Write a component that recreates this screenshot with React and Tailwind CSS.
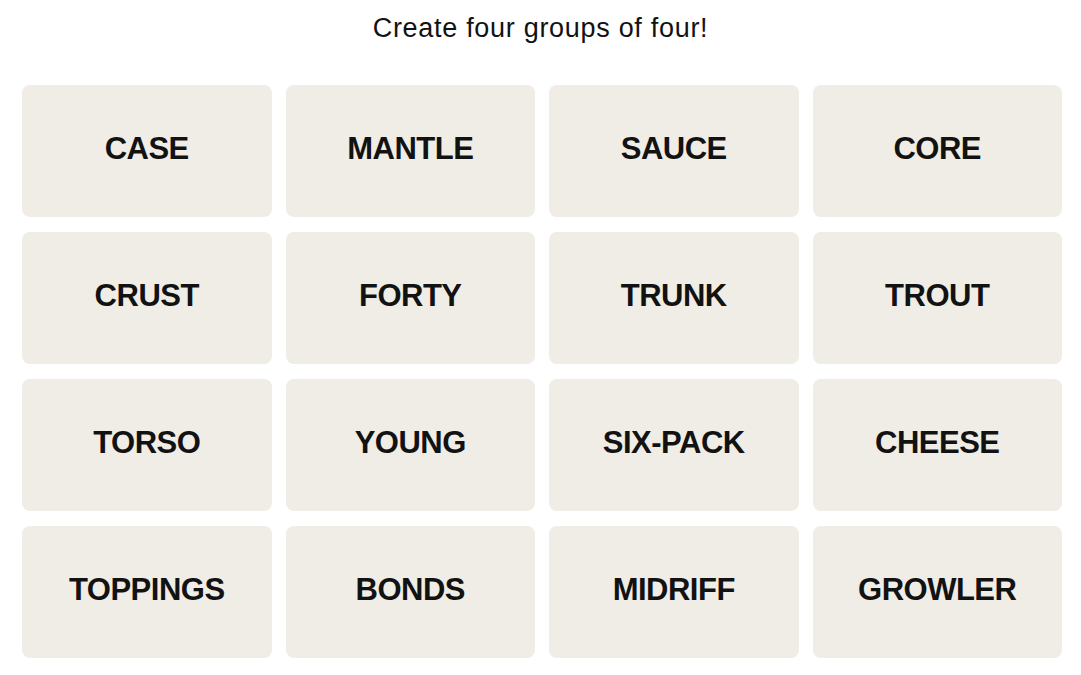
const words = [
  'CASE', 'MANTLE', 'SAUCE', 'CORE',
  'CRUST', 'FORTY', 'TRUNK', 'TROUT',
  'TORSO', 'YOUNG', 'SIX-PACK', 'CHEESE',
  'TOPPINGS', 'BONDS', 'MIDRIFF', 'GROWLER',
];

export default function App() {
  return (
    <div className="min-h-screen bg-white" style={{ fontFamily: '"Liberation Sans", Arial, sans-serif' }}>
      <p className="pt-[12px] text-center text-[27px] leading-[32px] tracking-[0.7px] text-[#121212]">
        Create four groups of four!
      </p>

      <div className="ml-[22px] mt-[41px] grid w-[1040px] grid-cols-4 gap-x-[14px] gap-y-[15px]">
        {words.map((w) => (
          <button
            key={w}
            className="flex h-[132px] items-center justify-center rounded-lg bg-[#efede6] pb-[4px] text-[31px] font-bold tracking-[-0.5px] text-[#121212]"
          >
            {w}
          </button>
        ))}
      </div>
    </div>
  );
}
